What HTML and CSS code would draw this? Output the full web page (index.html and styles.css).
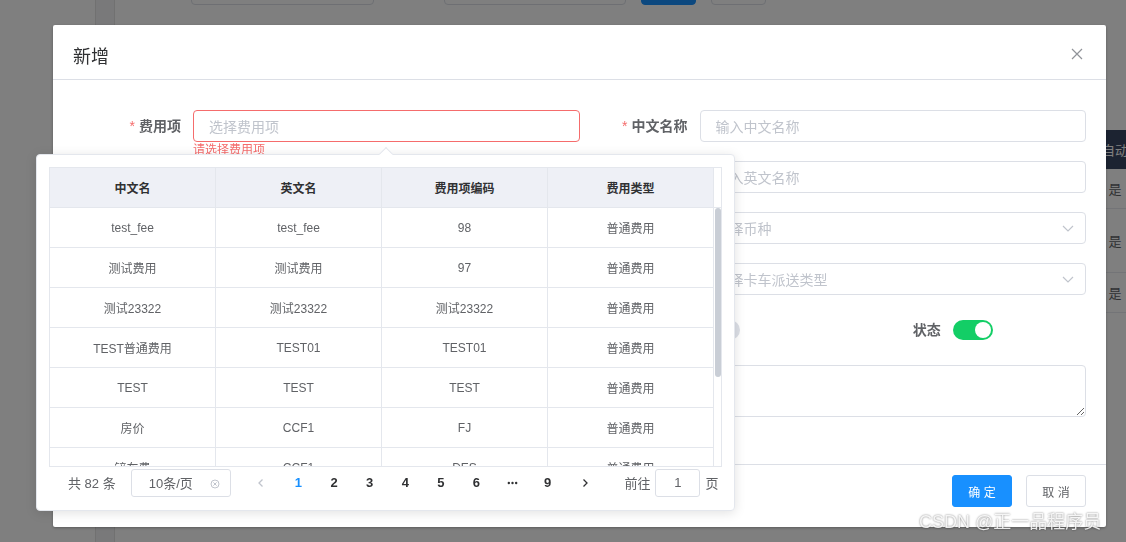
FILE: index.html
```html
<!DOCTYPE html>
<html lang="zh-CN">
<head>
<meta charset="utf-8">
<title>新增</title>
<link rel="stylesheet" href="styles.css">
</head>
<body>
<div class="page">
  <aside class="aside"></aside>
  <div class="strip"></div>
  <main class="main">
    <div class="toolbar">
      <div class="tb-input a"></div>
      <div class="tb-input b"></div>
      <div class="tb-btn primary"></div>
      <div class="tb-btn"></div>
    </div>
    <div class="bg-table">
      <div class="bg-row bg-head"><div class="bg-fill"></div><div class="bg-last">是否自动派送</div></div>
      <div class="bg-row"><div class="bg-fill"></div><div class="bg-last">是</div></div>
      <div class="bg-row tall"><div class="bg-fill"></div><div class="bg-last">是</div></div>
      <div class="bg-row"><div class="bg-fill"></div><div class="bg-last">是</div></div>
    </div>
  </main>
</div>

<div class="mask"></div>

<div class="dialog">
  <div class="dlg-header">
    <span class="dlg-title">新增</span>
    <svg class="dlg-close" viewBox="0 0 12 12"><path d="M1 1L11 11M11 1L1 11"/></svg>
  </div>
  <div class="dlg-body">
    <div class="form">
      <div class="item">
        <label class="lbl req">费用项</label>
        <div class="ctl">
          <div class="input error">选择费用项</div>
          <div class="err">请选择费用项</div>
        </div>
      </div>
      <div class="item">
        <label class="lbl req">中文名称</label>
        <div class="ctl"><div class="input">输入中文名称</div></div>
      </div>

      <div class="item">
        <label class="lbl req">费用项编码</label>
        <div class="ctl"><div class="input">输入费用项编码</div></div>
      </div>
      <div class="item">
        <label class="lbl">英文名称</label>
        <div class="ctl"><div class="input">输入英文名称</div></div>
      </div>

      <div class="item">
        <label class="lbl req">费用类型</label>
        <div class="ctl"><div class="input select"><span>选择费用类型</span><svg class="arrow" viewBox="0 0 12 12"><path d="M1 4L6 9L11 4"/></svg></div></div>
      </div>
      <div class="item">
        <label class="lbl">币种</label>
        <div class="ctl"><div class="input select"><span>选择币种</span><svg class="arrow" viewBox="0 0 12 12"><path d="M1 4L6 9L11 4"/></svg></div></div>
      </div>

      <div class="item">
        <label class="lbl">计费单位</label>
        <div class="ctl"><div class="input select"><span>选择计费单位</span><svg class="arrow" viewBox="0 0 12 12"><path d="M1 4L6 9L11 4"/></svg></div></div>
      </div>
      <div class="item">
        <label class="lbl">卡车派送类型</label>
        <div class="ctl"><div class="input select"><span>选择卡车派送类型</span><svg class="arrow" viewBox="0 0 12 12"><path d="M1 4L6 9L11 4"/></svg></div></div>
      </div>

      <div class="item">
        <label class="lbl">是否应收</label>
        <div class="ctl"><div class="switch"></div></div>
      </div>
      <div class="sub">
        <div class="item">
          <label class="lbl">是否应付</label>
          <div class="ctl"><div class="switch"></div></div>
        </div>
        <div class="item">
          <label class="lbl">状态</label>
          <div class="ctl"><div class="switch on"></div></div>
        </div>
      </div>

      <div class="item full">
        <label class="lbl">备注</label>
        <div class="ctl"><textarea class="textarea"></textarea></div>
      </div>
    </div>
  </div>
  <div class="dlg-footer">
    <button class="btn primary">确 定</button>
    <button class="btn">取 消</button>
  </div>
</div>

<div class="popover">
  <div class="pop-arrow"></div>
  <div class="ptable">
    <div class="prow phead">
      <div class="pc">中文名</div>
      <div class="pc">英文名</div>
      <div class="pc">费用项编码</div>
      <div class="pc">费用类型</div>
      <div class="pgut"></div>
    </div>
    <div class="pbody">
      <div class="prows">
        <div class="prow"><div class="pc">test_fee</div><div class="pc">test_fee</div><div class="pc">98</div><div class="pc">普通费用</div></div>
        <div class="prow"><div class="pc">测试费用</div><div class="pc">测试费用</div><div class="pc">97</div><div class="pc">普通费用</div></div>
        <div class="prow"><div class="pc">测试23322</div><div class="pc">测试23322</div><div class="pc">测试23322</div><div class="pc">普通费用</div></div>
        <div class="prow"><div class="pc">TEST普通费用</div><div class="pc">TEST01</div><div class="pc">TEST01</div><div class="pc">普通费用</div></div>
        <div class="prow"><div class="pc">TEST</div><div class="pc">TEST</div><div class="pc">TEST</div><div class="pc">普通费用</div></div>
        <div class="prow"><div class="pc">房价</div><div class="pc">CCF1</div><div class="pc">FJ</div><div class="pc">普通费用</div></div>
        <div class="prow"><div class="pc">铲车费</div><div class="pc">CCF1</div><div class="pc">DES</div><div class="pc">普通费用</div></div>
        <div class="prow"><div class="pc">仓储费</div><div class="pc">CCF2</div><div class="pc">CC</div><div class="pc">普通费用</div></div>
      </div>
      <div class="pscroll"><div class="thumb"></div></div>
    </div>
  </div>
  <div class="pager">
    <span class="total">共 82 条</span>
    <div class="sizes"><span class="sz-text">10条/页</span><svg class="sz-clear" viewBox="0 0 10 10"><circle cx="5" cy="5" r="4"/><path d="M3.4 3.4L6.6 6.6M6.6 3.4L3.4 6.6"/></svg></div>
    <span class="nav prev"><svg viewBox="0 0 10 10"><path d="M6.5 1.5L3 5L6.5 8.5"/></svg></span>
    <ul class="pages">
      <li class="active">1</li>
      <li>2</li>
      <li>3</li>
      <li>4</li>
      <li>5</li>
      <li>6</li>
      <li><svg class="more" viewBox="0 0 12 4"><circle cx="2" cy="2" r="1.3"/><circle cx="6" cy="2" r="1.3"/><circle cx="10" cy="2" r="1.3"/></svg></li>
      <li>9</li>
    </ul>
    <span class="nav next"><svg viewBox="0 0 10 10"><path d="M3.5 1.5L7 5L3.5 8.5"/></svg></span>
    <span class="jump">前往</span>
    <div class="jump-input">1</div>
    <span class="jump-end">页</span>
  </div>
</div>

<div class="watermark">CSDN @正一品程序员</div>
</body>
</html>
```

FILE: styles.css
```css
* { box-sizing: border-box; }
html, body { margin: 0; padding: 0; }
body {
  width: 1126px;
  height: 542px;
  overflow: hidden;
  position: relative;
  background: #fff;
  font-family: "Liberation Sans", "Noto Sans CJK SC", sans-serif;
  color: #606266;
}

/* background page (under the mask) */
.page { display: flex; height: 542px; }
.aside { width: 95px; flex: none; background: #fff; }
.strip { width: 20px; flex: none; background: #f2f3f5; border-left: 1px solid #e2e2e2; border-right: 1px solid #e2e2e2; }
.main { flex: 1; min-width: 0; display: flex; flex-direction: column; }
.toolbar { display: flex; align-items: center; height: 32px; margin-top: -27px; padding-left: 76px; }
.tb-input { height: 32px; border: 1px solid #dcdfe6; border-radius: 4px; background: #fff; }
.tb-input.a { width: 183px; }
.tb-input.b { width: 182px; margin-left: 70px; }
.tb-btn { width: 55px; height: 32px; margin-left: 15px; border: 1px solid #dcdfe6; border-radius: 4px; background: #fff; }
.tb-btn.primary { background: #1890ff; border-color: #1890ff; }
.bg-table { margin-top: 125px; margin-right: -44px; font-size: 13px; color: #606266; }
.bg-row { display: flex; align-items: center; height: 40px; border-bottom: 1px solid #e6e8ee; }
.bg-row.tall { height: 64px; }
.bg-head { height: 39px; background: #384662; color: #fff; border-bottom: none; }
.bg-fill { flex: 1; }
.bg-last { width: 110px; flex: none; text-align: center; }

/* mask */
.mask { position: fixed; inset: 0; background: rgba(0, 0, 0, 0.5); }

/* dialog */
.dialog {
  position: fixed;
  left: 53px;
  top: 25px;
  width: 1053px;
  background: #fff;
  border-radius: 2px;
  box-shadow: 0 1px 3px rgba(0, 0, 0, 0.3);
}
.dlg-header { position: relative; padding: 20px 20px 10px; border-bottom: 1px solid #dcdfe6; }
.dlg-title { display: block; font-size: 18px; line-height: 24px; color: #303133; }
.dlg-close { position: absolute; top: 23px; right: 23px; width: 12px; height: 12px; fill: none; stroke: #909399; stroke-width: 1.2; }
.dlg-body { padding: 30px 20px 30px; }
.dlg-footer { display: flex; justify-content: flex-end; gap: 14px; padding: 10px 20px 20px; border-top: 1px solid #dcdfe6; }

.form { display: grid; grid-template-columns: 1fr 1fr; row-gap: 19px; }
.sub { display: grid; grid-template-columns: 1fr 1fr; }
.item { display: flex; align-items: center; min-height: 32px; }
.item.full { grid-column: 1 / -1; align-items: flex-start; margin-bottom: 17px; }
.lbl {
  width: 120px;
  flex: none;
  padding-right: 12px;
  text-align: right;
  font-size: 14px;
  font-weight: 700;
  line-height: 32px;
  color: #606266;
}
.req::before { content: "*"; color: #f56c6c; margin-right: 4px; font-weight: 400; }
.ctl { flex: 1; min-width: 0; position: relative; }
.input {
  height: 32px;
  display: flex;
  align-items: center;
  padding: 0 15px;
  border: 1px solid #dcdfe6;
  border-radius: 4px;
  font-size: 14px;
  color: #c0c4cc;
  white-space: nowrap;
  overflow: hidden;
}
.input.error { border-color: #f56c6c; }
.input.select { justify-content: space-between; padding-right: 11px; }
.arrow { width: 12px; height: 12px; fill: none; stroke: #c0c4cc; stroke-width: 1.2; flex: none; }
.err { position: absolute; top: 100%; left: 0; padding-top: 2px; font-size: 12px; line-height: 1; color: #f56c6c; }
.switch { position: relative; width: 40px; height: 20px; border-radius: 10px; background: #dcdfe6; }
.switch::after { content: ""; position: absolute; top: 2px; left: 2px; width: 16px; height: 16px; border-radius: 50%; background: #fff; }
.switch.on { background: #13ce66; }
.switch.on::after { left: 22px; }
.textarea {
  display: block;
  width: 100%;
  height: 52px;
  padding: 5px 15px;
  border: 1px solid #dcdfe6;
  border-radius: 4px;
  font: inherit;
  font-size: 14px;
  resize: vertical;
}

.btn {
  width: 60px;
  height: 32px;
  padding: 0;
  border: 1px solid #dcdfe6;
  border-radius: 3px;
  background: #fff;
  color: #606266;
  font-family: inherit;
  font-size: 12px;
}
.btn.primary { background: #1890ff; border-color: #1890ff; color: #fff; }

/* popover */
.popover {
  position: absolute;
  left: 36px;
  top: 154px;
  width: 699px;
  padding: 12px;
  background: #fff;
  border: 1px solid #e4e7ed;
  border-radius: 4px;
  box-shadow: 0 2px 12px rgba(0, 0, 0, 0.12);
}
.pop-arrow {
  position: absolute;
  top: -6px;
  left: 344px;
  width: 10px;
  height: 10px;
  background: #fff;
  border-left: 1px solid #e4e7ed;
  border-top: 1px solid #e4e7ed;
  transform: rotate(45deg);
}
.ptable { border: 1px solid #e4e7ed; font-size: 12px; }
.prow { display: grid; grid-template-columns: repeat(4, 166px); height: 40px; border-bottom: 1px solid #e4e7ed; }
.phead { grid-template-columns: repeat(4, 166px) 7px; background: #eef0f6; color: #303133; font-weight: 700; }
.pc { display: flex; align-items: center; justify-content: center; border-right: 1px solid #e4e7ed; white-space: nowrap; }
.pgut { background: #fff; }
.pbody { display: flex; height: 258px; overflow: hidden; }
.prows { width: 664px; flex: none; }
.prows .prow { color: #606266; }
.pscroll { width: 7px; flex: none; padding-left: 1px; }
.thumb { width: 6px; height: 169px; border-radius: 3px; background: #c9ced6; }

.pager { display: flex; align-items: center; height: 31px; font-size: 13px; color: #606266; }
.total { margin-left: 19px; }
.sizes {
  width: 100px;
  height: 28px;
  margin-left: 15px;
  display: flex;
  align-items: center;
  padding-left: 17px;
  border: 1px solid #dcdfe6;
  border-radius: 3px;
  position: relative;
}
.sz-text { color: #606266; }
.sz-clear { position: absolute; right: 10px; top: 9px; width: 10px; height: 10px; fill: none; stroke: #c0c4cc; stroke-width: 1; }
.nav { width: 30px; height: 28px; display: flex; align-items: center; justify-content: center; }
.nav svg { width: 10px; height: 10px; fill: none; stroke-width: 1.3; }
.prev { margin-left: 15px; }
.prev svg { stroke: #c0c4cc; }
.next svg { stroke: #303133; }
.pages { display: flex; margin: 0 0 0 5px; padding: 0; list-style: none; }
.pages li { width: 35.6px; text-align: center; font-weight: 700; color: #303133; line-height: 28px; }
.pages li.active { color: #1890ff; }
.more { width: 11px; height: 4px; fill: #303133; vertical-align: middle; }
.next { margin-left: 5px; }
.jump { margin-left: 24px; }
.jump-input {
  width: 45px;
  height: 28px;
  margin: 0 5px;
  border: 1px solid #dcdfe6;
  border-radius: 3px;
  text-align: center;
  line-height: 26px;
}

.watermark {
  position: absolute;
  left: 919px;
  top: 511px;
  font-size: 18px;
  line-height: 22px;
  color: rgba(255, 255, 255, 0.88);
  text-shadow: 0 0 2px rgba(0, 0, 0, 0.55);
  white-space: nowrap;
}
```
